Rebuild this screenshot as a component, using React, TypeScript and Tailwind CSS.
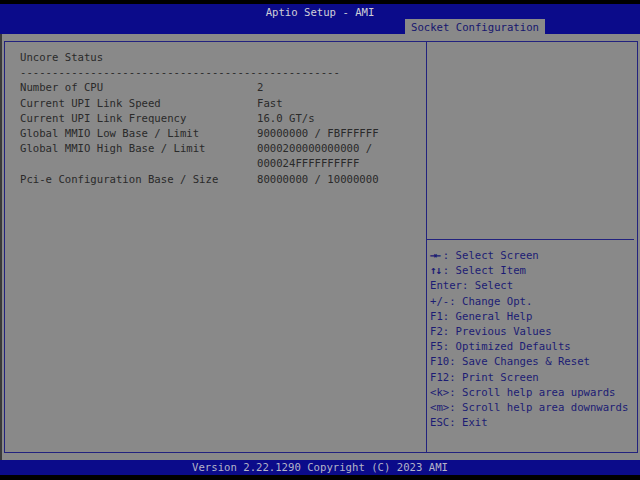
// ** React Import
import type { FC } from "react"

const rows: [string, string[]][] = [
    ["Number of CPU", ["2"]],
    ["Current UPI Link Speed", ["Fast"]],
    ["Current UPI Link Frequency", ["16.0 GT/s"]],
    ["Global MMIO Low Base / Limit", ["90000000 / FBFFFFFF"]],
    ["Global MMIO High Base / Limit", ["0000200000000000 /", "000024FFFFFFFFFF"]],
    ["Pci-e Configuration Base / Size", ["80000000 / 10000000"]],
]

const help = [
    "Enter: Select",
    "+/-: Change Opt.",
    "F1: General Help",
    "F2: Previous Values",
    "F5: Optimized Defaults",
    "F10: Save Changes & Reset",
    "F12: Print Screen",
    "<k>: Scroll help area upwards",
    "<m>: Scroll help area downwards",
    "ESC: Exit",
]

const App: FC = () => {
    return (
        <div
            className="w-[640px] h-[480px] bg-black flex flex-col text-[10.63px] leading-[15.2px] overflow-hidden"
            style={{ fontFamily: '"DejaVu Sans Mono", "Liberation Mono", monospace' }}
        >
            <div className="h-[4px]" />

            {/* Header */}
            <div className="h-[30px] bg-[#0b0b8a] flex flex-col">
                <div className="h-[15px] leading-[18px] text-center text-[#cfcfd8]">Aptio Setup - AMI</div>
                <div className="h-[15px] flex">
                    <div className="ml-[405px] w-[140px] h-[15px] bg-[#898989] text-[#16166e] pl-[6px] leading-[17px]">
                        Socket Configuration
                    </div>
                </div>
            </div>

            {/* Body */}
            <div className="h-[426px] bg-[#898989] pt-[7px] pb-[7px] pl-[4px] pr-[2px] border-l-2 border-[#3a3a3a]">
                <div className="h-[412px] border border-[#22227e] flex -ml-[2px]">
                    <div className="w-[421px] pl-[15px] pt-[8px] text-[#2a2a2a]">
                        <div>Uncore Status</div>
                        <div>{"-".repeat(50)}</div>
                        {rows.map(([label, values], index) => (
                            <div key={index} className="flex">
                                <div className="w-[237px] shrink-0 whitespace-pre">{label}</div>
                                <div className="flex flex-col whitespace-pre">
                                    {values.map((v, i) => (
                                        <div key={i}>{v}</div>
                                    ))}
                                </div>
                            </div>
                        ))}
                    </div>
                    <div className="flex-1 border-l border-[#22227e] flex flex-col">
                        <div className="h-[197px]" />
                        <div className="h-px bg-[#22227e] mr-[3px]" />
                        <div className="pl-[3px] pt-[8px] text-[#1c1c74] whitespace-pre">
                            <div className="flex">
                                <span className="w-[12.8px] font-bold tracking-[-2px] text-[11px]">→←</span>
                                <span>: Select Screen</span>
                            </div>
                            <div className="flex">
                                <span className="w-[12.8px] font-bold tracking-[-1px] text-[11px]">↑↓</span>
                                <span>: Select Item</span>
                            </div>
                            {help.map((line, index) => (
                                <div key={index}>{line}</div>
                            ))}
                        </div>
                    </div>
                </div>
            </div>

            {/* Footer */}
            <div className="h-[15px] bg-[#0b0b8a] text-center leading-[16px] text-[#b4b4c8]">
                Version 2.22.1290 Copyright (C) 2023 AMI
            </div>
            <div className="h-[5px]" />
        </div>
    )
}

export default App
